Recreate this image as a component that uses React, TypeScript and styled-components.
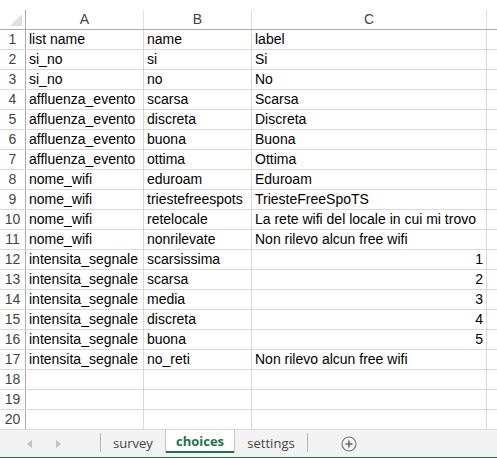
import React from "react";
import styled, { createGlobalStyle } from "styled-components";

const Global = createGlobalStyle`
  html, body { margin: 0; padding: 0; background: #fff; overflow: hidden; }
  body { font-family: "Liberation Sans", Arial, sans-serif; }
`;

const COLS = [
  { key: "A", width: 117 },
  { key: "B", width: 107 },
  { key: "C", width: 234 },
];

type Cell = string | number;
const ROWS: Cell[][] = [
  ["list name", "name", "label"],
  ["si_no", "si", "Si"],
  ["si_no", "no", "No"],
  ["affluenza_evento", "scarsa", "Scarsa"],
  ["affluenza_evento", "discreta", "Discreta"],
  ["affluenza_evento", "buona", "Buona"],
  ["affluenza_evento", "ottima", "Ottima"],
  ["nome_wifi", "eduroam", "Eduroam"],
  ["nome_wifi", "triestefreespots", "TriesteFreeSpoTS"],
  ["nome_wifi", "retelocale", "La rete wifi del locale in cui mi trovo"],
  ["nome_wifi", "nonrilevate", "Non rilevo alcun free wifi"],
  ["intensita_segnale", "scarsissima", 1],
  ["intensita_segnale", "scarsa", 2],
  ["intensita_segnale", "media", 3],
  ["intensita_segnale", "discreta", 4],
  ["intensita_segnale", "buona", 5],
  ["intensita_segnale", "no_reti", "Non rilevo alcun free wifi"],
  ["", "", ""],
  ["", "", ""],
  ["", "", ""],
];

const Page = styled.div`
  width: 497px;
  height: 458px;
  display: flex;
  flex-direction: column;
  background: #fff;
  overflow: hidden;
`;

const TopGap = styled.div`
  height: 10px;
  flex: none;
`;

const Sheet = styled.div`
  flex: 1;
  display: flex;
  flex-direction: column;
`;

const Row = styled.div<{ $header?: boolean }>`
  display: flex;
  height: ${(p) => (p.$header ? 19 : 19)}px;
  border-bottom: 1px solid ${(p) => (p.$header ? "#ababab" : "#d9d9d9")};
  flex: none;
`;

const Corner = styled.div`
  width: 25px;
  flex: none;
  border-right: 1px solid #ababab;
  position: relative;
  &::after {
    content: "";
    position: absolute;
    right: 3px;
    bottom: 3px;
    width: 0;
    height: 0;
    border-left: 12px solid transparent;
    border-bottom: 12px solid #dfdfdf;
  }
`;

const RowHead = styled.div`
  width: 25px;
  flex: none;
  border-right: 1px solid #ababab;
  color: #444;
  font-size: 14px;
  line-height: 19px;
  text-align: center;
`;

const ColHead = styled.div<{ $w: number }>`
  width: ${(p) => p.$w}px;
  flex: none;
  border-right: 1px solid #e1e1e1;
  color: #444;
  font-size: 14px;
  line-height: 19px;
  text-align: center;
`;

const CellBox = styled.div<{ $w: number; $num?: boolean }>`
  width: ${(p) => p.$w}px;
  flex: none;
  border-right: 1px solid #d9d9d9;
  color: #000;
  font-size: 14px;
  line-height: 19px;
  padding: 0 3px;
  box-sizing: content-box;
  margin-right: 0;
  white-space: nowrap;
  overflow: visible;
  text-align: ${(p) => (p.$num ? "right" : "left")};
  & {
    width: ${(p) => p.$w - 6}px;
  }
`;

const TabBar = styled.div`
  height: 27px;
  flex: none;
  background: #f3f3f3;
  border-bottom: 2px solid #217346;
  display: flex;
  align-items: stretch;
`;

const Arrows = styled.div`
  width: 100px;
  flex: none;
  display: flex;
  align-items: center;
  padding-left: 27px;
  gap: 24px;
  box-sizing: border-box;
`;

const Arrow = styled.div<{ $dir: "l" | "r" }>`
  width: 0;
  height: 0;
  border-top: 4px solid transparent;
  border-bottom: 4px solid transparent;
  ${(p) =>
    p.$dir === "l"
      ? "border-right: 5px solid #c3c3c3;"
      : "border-left: 5px solid #c3c3c3;"}
`;

const Sep = styled.div`
  width: 1px;
  flex: none;
  background: #b5b5b5;
  margin: 3px 0 5px;
`;

const Tab = styled.div<{ $w: number; $active?: boolean }>`
  width: ${(p) => p.$w}px;
  flex: none;
  box-sizing: border-box;
  display: flex;
  align-items: center;
  justify-content: center;
  font-family: "Open Sans", "Noto Sans", sans-serif;
  font-size: 13px;
  padding-bottom: 2px;
  color: ${(p) => (p.$active ? "#217346" : "#444")};
  font-weight: ${(p) => (p.$active ? 700 : 400)};
  background: ${(p) => (p.$active ? "#fff" : "transparent")};
  border-left: ${(p) => (p.$active ? "1px solid #c6c6c6" : "none")};
  border-right: ${(p) => (p.$active ? "1px solid #c6c6c6" : "none")};
  margin-bottom: ${(p) => (p.$active ? "4px" : "0")};
  box-shadow: ${(p) => (p.$active ? "inset 0 -2px 0 #217346" : "none")};
`;

const AddWrap = styled.div`
  display: flex;
  align-items: center;
  padding-left: 33px;
`;

const AddIcon = () => (
  <svg width="16" height="16" viewBox="0 0 16 16">
    <circle cx="8" cy="8" r="7" fill="none" stroke="#7a7a7a" strokeWidth="1.2" />
    <path d="M8 4.5v7M4.5 8h7" stroke="#6a6a6a" strokeWidth="1.6" />
  </svg>
);

export default function App() {
  return (
    <Page>
      <Global />
      <TopGap />
      <Sheet>
        <Row $header>
          <Corner />
          {COLS.map((c) => (
            <ColHead key={c.key} $w={c.width}>
              {c.key}
            </ColHead>
          ))}
        </Row>
        {ROWS.map((r, i) => (
          <Row key={i}>
            <RowHead>{i + 1}</RowHead>
            {r.map((v, j) => (
              <CellBox key={j} $w={COLS[j].width} $num={typeof v === "number"}>
                {v}
              </CellBox>
            ))}
          </Row>
        ))}
      </Sheet>
      <TabBar>
        <Arrows>
          <Arrow $dir="l" />
          <Arrow $dir="r" />
        </Arrows>
        <Sep />
        <Tab $w={64}>survey</Tab>
        <Tab $w={70} $active>
          choices
        </Tab>
        <Tab $w={72}>settings</Tab>
        <Sep />
        <AddWrap>
          <AddIcon />
        </AddWrap>
      </TabBar>
    </Page>
  );
}
